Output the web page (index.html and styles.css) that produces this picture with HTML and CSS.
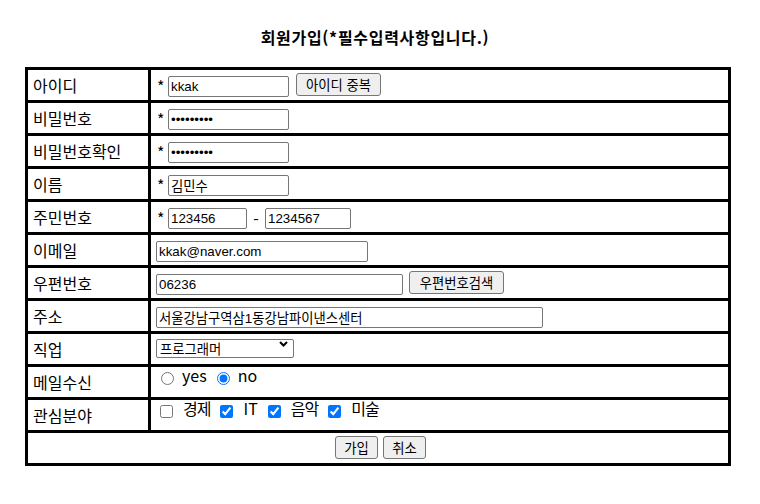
FILE: index.html
```html
<!DOCTYPE html>
<html lang="ko">
<head>
<meta charset="utf-8">
<title>회원가입</title>
<link rel="stylesheet" href="styles.css">
</head>
<body>
<div class="page">
  <h1 class="title">회원가입(*필수입력사항입니다.)</h1>
  <form class="join">
    <div class="lab">아이디</div>
    <div class="val"><span class="req">*</span><input class="txt w121" type="text" value="kkak"><button type="button" class="btn w85 ml7">아이디 중복</button></div>

    <div class="lab">비밀번호</div>
    <div class="val"><span class="req">*</span><input class="txt w121" type="password" value="123456789"></div>

    <div class="lab">비밀번호확인</div>
    <div class="val"><span class="req">*</span><input class="txt w121" type="password" value="123456789"></div>

    <div class="lab">이름</div>
    <div class="val"><span class="req">*</span><input class="txt w121" type="text" value="김민수"></div>

    <div class="lab">주민번호</div>
    <div class="val"><span class="req">*</span><input class="txt w79" type="text" value="123456"><span class="dash">-</span><input class="txt w86" type="text" value="1234567"></div>

    <div class="lab">이메일</div>
    <div class="val"><input class="txt w212" type="text" value="kkak@naver.com"></div>

    <div class="lab">우편번호</div>
    <div class="val"><input class="txt w247" type="text" value="06236"><button type="button" class="btn w95 ml6">우편번호검색</button></div>

    <div class="lab">주소</div>
    <div class="val"><input class="txt w387" type="text" value="서울강남구역삼1동강남파이낸스센터"></div>

    <div class="lab">직업</div>
    <div class="val">
      <span class="selwrap">
        <select class="sel"><option>프로그래머</option><option>디자이너</option><option>기획자</option></select>
        <svg class="chev" width="9" height="6" viewBox="0 0 9 6" aria-hidden="true"><polyline points="1,1 4.5,4.5 8,1" fill="none" stroke="#000" stroke-width="2"/></svg>
      </span>
    </div>

    <div class="lab">메일수신</div>
    <div class="val">
      <input class="rad" type="radio" name="mail"><span class="opt">yes</span>
      <input class="rad" type="radio" name="mail" checked><span class="opt">no</span>
    </div>

    <div class="lab">관심분야</div>
    <div class="val">
      <input class="chk" type="checkbox"><span class="opt ko">경제</span>
      <input class="chk" type="checkbox" checked><span class="opt">IT</span>
      <input class="chk" type="checkbox" checked><span class="opt ko">음악</span>
      <input class="chk" type="checkbox" checked><span class="opt ko">미술</span>
    </div>

    <div class="act">
      <button type="submit" class="btn w43">가입</button><button type="reset" class="btn w43 ml5">취소</button>
    </div>
  </form>
</div>
</body>
</html>
```

FILE: styles.css
```css
html, body {
  margin: 0;
  padding: 0;
  background: #fff;
}
body {
  font-family: "Noto Sans CJK KR", "Noto Sans", sans-serif;
  color: #000;
}
.page {
  width: 706px;
  padding-left: 25px;
}
.title {
  margin: 0;
  height: 67px;
  box-sizing: border-box;
  padding: 25px 6px 0 0;
  font-size: 16px;
  line-height: 24px;
  font-weight: bold;
  letter-spacing: 0.7px;
  text-align: center;
}
.join {
  display: grid;
  grid-template-columns: 120px 577px;
  grid-auto-rows: 30px;
  gap: 3px;
  padding: 3px;
  width: 700px;
  background: #000;
}
.lab {
  background: #fff;
  display: flex;
  align-items: center;
  padding-left: 5px;
  font-size: 16px;
  white-space: nowrap;
}
.val {
  background: #fff;
  display: flex;
  align-items: flex-start;
  padding-left: 5px;
  font-size: 16px;
  white-space: nowrap;
}
.act {
  grid-column: 1 / -1;
  background: #fff;
  display: flex;
  align-items: flex-start;
  justify-content: center;
  padding-left: 5px;
}
.req {
  width: 12px;
  line-height: 16px;
  margin-top: 8px;
  padding-left: 1px;
  box-sizing: border-box;
}
.dash {
  width: 18px;
  text-align: center;
  line-height: 16px;
  margin-top: 9px;
}
.txt {
  box-sizing: border-box;
  height: 21px;
  margin: 6px 0 0 0;
  padding: 1px 2px;
  border: 1px solid #767676;
  border-radius: 2px;
  background: #fff;
  color: #000;
  font-family: "Liberation Sans", "Noto Sans CJK KR", sans-serif;
  font-size: 13.33px;
}
.w121 { width: 121px; }
.w79 { width: 79px; }
.w86 { width: 86px; }
.w212 { width: 212px; }
.w247 { width: 247px; }
.w387 { width: 387px; }
.btn {
  box-sizing: border-box;
  height: 23px;
  margin: 3px 0 0 0;
  padding: 0;
  border: 1px solid #767676;
  border-radius: 3px;
  background: #efefef;
  color: #000;
  font-family: "Noto Sans CJK KR", sans-serif;
  font-size: 13.33px;
  line-height: 19px;
  text-align: center;
}
.w85 { width: 85px; }
.w95 { width: 95px; }
.w43 { width: 43px; }
.ml7 { margin-left: 7px; }
.ml6 { margin-left: 6px; }
.ml5 { margin-left: 5px; }
.selwrap {
  position: relative;
  display: block;
  margin-top: 1px;
  width: 138px;
  height: 19px;
}
.sel {
  appearance: none;
  -webkit-appearance: none;
  box-sizing: border-box;
  width: 138px;
  height: 19px;
  margin: 0;
  padding: 0 0 0 3px;
  border: 1px solid #767676;
  border-radius: 2px;
  background: #fff;
  color: #000;
  font-family: "Noto Sans CJK KR", sans-serif;
  font-size: 13.33px;
  line-height: 17px;
}
.chev {
  position: absolute;
  right: 6px;
  top: 6px;
}
.rad {
  width: 13px;
  height: 13px;
  margin: 5px 3px 0 5px;
}
.chk {
  width: 13px;
  height: 13px;
  margin: 5px 0 0 4px;
}
.chk ~ .chk {
  margin-left: 10px;
}
.opt {
  line-height: 16px;
  margin-left: 5px;
  margin-right: 5px;
}
.chk + .opt {
  margin-left: 10px;
  margin-right: 0;
}
.ko {
  letter-spacing: -1px;
}
```
